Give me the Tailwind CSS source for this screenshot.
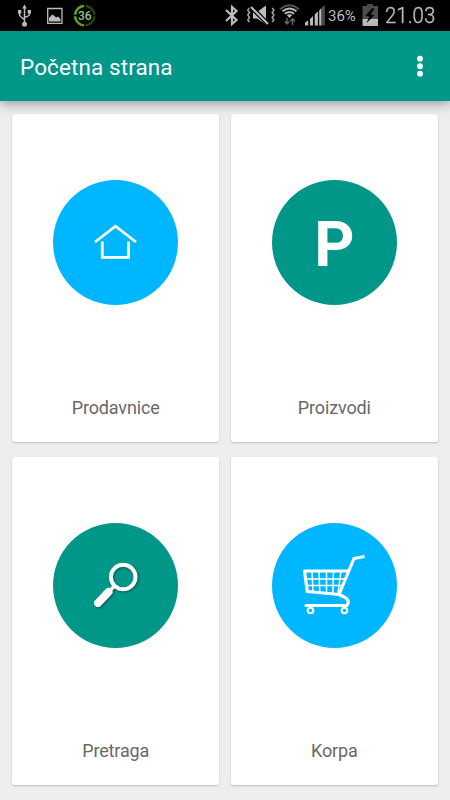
<!DOCTYPE html>
<html lang="sr">
<head>
<meta charset="utf-8">
<title>Početna strana</title>
<script src="https://cdn.jsdelivr.net/npm/@tailwindcss/browser@4"></script>
</head>
<body class="w-[450px] h-[800px] overflow-hidden flex flex-col bg-[#ededed] font-[Roboto,sans-serif]">
<div class="h-[31px] shrink-0 bg-black flex items-start text-[#bdbdbd]">
  <svg class="ml-[16px] shrink-0" width="17" height="31" viewBox="0 0 17 31" fill="none" stroke="#bdbdbd" stroke-width="1.500"><path d="M8.500 8v15M3.500 12v2.500q0 2 5 5M13.500 12v2q0 2-5 3.500"/><path d="M8.500 4.500l2.300 4H6.200z" fill="#bdbdbd" stroke="none"/><circle cx="8.500" cy="24.300" r="2.500" fill="#bdbdbd" stroke="none"/><path d="M2 10h3.300v3.500H2zM11.700 10H15v3.500h-3.300z" fill="#bdbdbd" stroke="none"/></svg>
  <svg class="ml-[14px] shrink-0" width="16" height="31" viewBox="0 0 16 31"><path d="M.7 8.500h14.300v14.800H.7z" fill="none" stroke="#bdbdbd" stroke-width="1.300"/><path d="M2 21.500v-3.500l2-2 1-1.500 2 1 2 2 2-1 2.500 2.500v2.500z" fill="#bdbdbd"/></svg>
  <svg class="ml-[10px] shrink-0" width="24" height="31" viewBox="0 0 24 31" fill="none" stroke-width="2.300"><circle cx="11.700" cy="15.600" r="9.700" stroke="#28470f"/><path d="M11.700 5.900a9.700 9.700 0 0 0 0 19.400" stroke="#58a825"/><path d="M11.700 4v4M11.700 23v4M0 15.600h4M19.500 15.600h4" stroke="#000" stroke-width="1.500"/><text x="11.700" y="19.700" text-anchor="middle" font-family="Roboto" font-size="12" font-weight="500" fill="#9cc47f" stroke="none">36</text></svg>
  <svg class="ml-[127px] shrink-0" width="16" height="31" viewBox="0 0 16 31" fill="none" stroke="#bdbdbd" stroke-width="2.200"><path d="M2 10l10.500 10L8 24V7l4.500 4L2 21"/></svg>
  <svg class="ml-[6px] shrink-0" width="30" height="31" viewBox="0 0 30 31" fill="#bdbdbd"><path d="M7 12h4l9-6.500v19L11 18.500H7z"/><path d="M3.500 8l-1.700 2 1.700 2.500-1.700 2.500 1.700 2.500-1.700 2.500 1.700 2M26.200 8l1.700 2-1.700 2.500 1.700 2.500-1.700 2.500 1.700 2.500-1.700 2" fill="none" stroke="#a5a5a5" stroke-width="1.500"/><path d="M5 7l17 17" stroke="#000" stroke-width="4.500"/><path d="M5 7l17 17" stroke="#bdbdbd" stroke-width="2.200"/></svg>
  <svg class="ml-[3px] shrink-0" width="24" height="31" viewBox="0 0 24 31" fill="none" stroke-width="2"><path d="M1 9.200q9.500-8 19 0" stroke="#505050"/><path d="M3.500 11.300q7-5.500 14 0M5.800 13.800q4.700-3.700 9.400 0" stroke="#b5b5b5"/><path d="M7.800 15q2.700-1.700 5.400 0l-2.700 3z" fill="#bdbdbd"/><path d="M8 18v6M5.700 21.500L8 24l2.300-2.500M13.500 25v-6M11.200 21.300l2.300-2.500 2.300 2.500" stroke="#686868" stroke-width="1.500"/></svg>
  <svg class="ml-[2px] shrink-0" width="21" height="31" viewBox="0 0 21 31" fill="#bdbdbd"><path d="M0 25.500v-3l3.200-2v5zM5 25.500v-6.500l3-3v9.500zM9.700 25.500v-11l3.200-3v14z"/><path d="M14.200 25.500v-15l2.300-2.500v17.500z"/><path d="M16.800 25.500V7.500l3-2.500v20.500z" fill="#4d4d4d"/></svg>
  <span class="ml-[2px] w-[28px] text-[15px] leading-[32px] whitespace-nowrap"><span class="inline-block origin-left">36%</span></span>
  <svg class="ml-[6px] shrink-0" width="17" height="31" viewBox="0 0 17 31"><path d="M.5 6H5V4h6v2h5v13H.5z" fill="#4c4c4c"/><path d="M.5 19H16v7H.5z" fill="#bdbdbd"/><path d="M10.500 8L3.500 15.500l3.700 1.200L4.500 23l8-7.800-4-.9 4-5.300z" fill="#000"/></svg>
  <span class="ml-[6px] text-[21.500px] leading-[31px] whitespace-nowrap"><span class="inline-block origin-left scale-x-[.95] font-light [-webkit-text-stroke:0.400px_#bdbdbd]">21.03</span></span>
</div>
<header class="relative z-10 h-[70px] shrink-0 bg-[#009688] flex items-center justify-between pl-[20px] pr-[26px] pt-[2px] text-white shadow-[0_2px_12px_rgba(0,0,0,0.4)]">
  <h1 class="text-[22.500px] leading-[30px] tracking-[0.1px]">Početna strana</h1>
  <svg class="-mt-[3px]" width="8" height="24" viewBox="0 0 8 24" fill="#fff"><circle cx="4" cy="4.700" r="2.900"/><circle cx="4" cy="12.200" r="2.900"/><circle cx="4" cy="19.700" r="2.900"/></svg>
</header>
<main class="grid grid-cols-2 gap-x-[12px] gap-y-[15px] px-[12.400px] pt-[12.700px]">
  <section class="h-[328px] bg-white rounded-[3px] shadow-[0_1px_2px_rgba(0,0,0,0.2)] flex flex-col items-center pt-[66px]">
    <div class="w-[125px] h-[125px] rounded-full bg-[#00b7ff] flex items-center justify-center">
      <svg width="45" height="40" viewBox="0 0 45 40" fill="none" stroke="#fff" stroke-width="2.800"><path d="M2 20L22.500 4.200 43 20"/><path d="M9.300 19.500v15.800h26.200V19.500"/></svg>
    </div>
    <p class="mt-[91px] text-[18px] leading-6 tracking-[-0.15px] text-[#686868]">Prodavnice</p>
  </section>
  <section class="h-[328px] bg-white rounded-[3px] shadow-[0_1px_2px_rgba(0,0,0,0.2)] flex flex-col items-center pt-[66px]">
    <div class="w-[125px] h-[125px] rounded-full bg-[#009688] flex items-center justify-center">
      <span class="text-white font-bold text-[62.500px] leading-none mt-[6px]">P</span>
    </div>
    <p class="mt-[91px] text-[18px] leading-6 tracking-[-0.15px] text-[#686868]">Proizvodi</p>
  </section>
  <section class="h-[328px] bg-white rounded-[3px] shadow-[0_1px_2px_rgba(0,0,0,0.2)] flex flex-col items-center pt-[66px]">
    <div class="w-[125px] h-[125px] rounded-full bg-[#009688] flex items-center justify-center">
      <svg class="drop-shadow-[1px_1px_1px_rgba(0,0,0,0.4)]" width="50" height="50" viewBox="0 0 50 50" fill="none" stroke="#fff"><circle cx="32.200" cy="17" r="12.300" stroke-width="4"/><path d="M24 25.500l-4 4" stroke-width="3.500"/><path d="M17.500 32L7 43" stroke-width="8" stroke-linecap="round"/></svg>
    </div>
    <p class="mt-[91px] text-[18px] leading-6 tracking-[-0.15px] text-[#686868]">Pretraga</p>
  </section>
  <section class="h-[328px] bg-white rounded-[3px] shadow-[0_1px_2px_rgba(0,0,0,0.2)] flex flex-col items-center pt-[66px]">
    <div class="w-[125px] h-[125px] rounded-full bg-[#00b7ff] flex items-center justify-center">
      <svg width="70" height="64" viewBox="0 0 70 64" fill="none" stroke="#fff" stroke-linejoin="round"><path d="M65.500 3.500L55 5.500 40 41.500 8.300 38.500 5.500 18H50" stroke-width="3.200"/><path d="M40 41.500c9 4 11 6 8 11H7" stroke-width="3.200" stroke-linecap="round"/><path d="M6.500 26H46M7.500 32.500H43.500M13 18l1 21M20 18l.8 21.500M27.500 18v22M34.500 18l-.7 22.500M42 18l-3 22" stroke-width="1.500"/><circle cx="11.500" cy="57.500" r="2.800" stroke-width="2"/><circle cx="45.500" cy="57.500" r="2.800" stroke-width="2"/></svg>
    </div>
    <p class="mt-[91px] text-[18px] leading-6 tracking-[-0.15px] text-[#686868]">Korpa</p>
  </section>
</main>
</body>
</html>
